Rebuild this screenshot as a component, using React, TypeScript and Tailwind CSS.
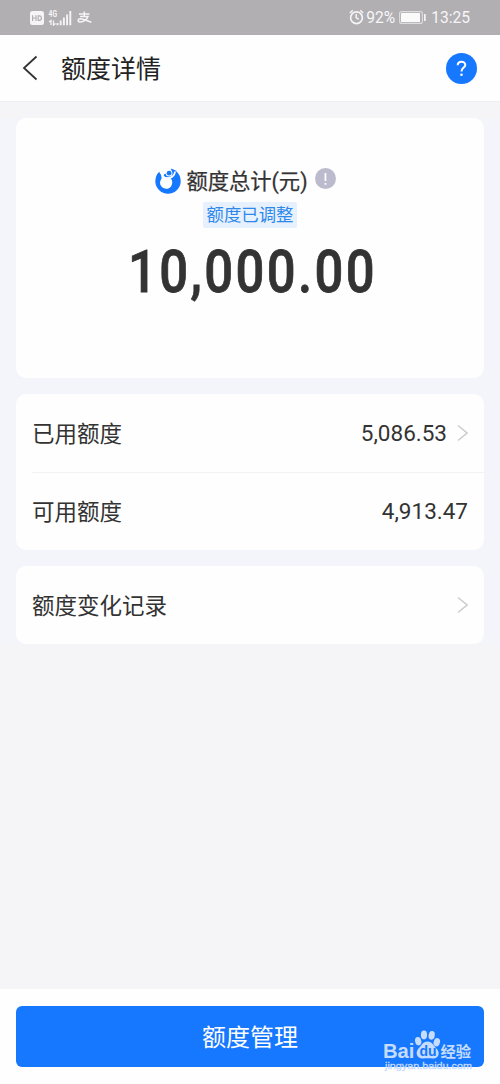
import type { ReactNode } from "react";

const records = [
  { label: "已用额度", value: "5,086.53", arrow: true },
  { label: "可用额度", value: "4,913.47", arrow: false },
];

function Chevron() {
  return (
    <svg width="12" height="18" viewBox="0 0 12 18" fill="none" className="shrink-0">
      <path d="M2 1.5 L11 9 L2 16.5" stroke="#cccccc" strokeWidth="1.5" />
    </svg>
  );
}

function Card({ children, className }: { children: ReactNode; className: string }) {
  return <div className={`rounded-[10px] bg-[#fefefe] ${className}`}>{children}</div>;
}

function StatusBar() {
  return (
    <div className="flex h-[35px] shrink-0 items-center justify-between bg-[#b1afb2] pl-[30px] pr-[30px] text-[#f7f6f8]">
      <div className="flex items-center">
        <svg width="14" height="14" viewBox="0 0 14 14">
          <rect width="14" height="14" rx="2.5" fill="#f5f4f6" />
          <path
            d="M2.6 4.2V10M6 4.2V10M2.6 7H6M8.2 4.8V9.4H9.3Q11.4 9.4 11.4 7.1Q11.4 4.8 9.3 4.8Z"
            stroke="#b1afb2"
            strokeWidth="1.2"
            fill="none"
          />
        </svg>
        <svg width="24" height="16" viewBox="0 0 24 16" className="ml-[4px]">
          <text x="0.5" y="7" fontSize="8.5" fontWeight="700" fontFamily="Roboto, sans-serif" textLength="8.5" lengthAdjust="spacingAndGlyphs" fill="#f5f4f6">4G</text>
          <path d="M3 15V10.5L1 12M5.5 10.5V15L7.5 13.5" stroke="#f5f4f6" strokeWidth="1.3" fill="none" />
          <path d="M9.5 13V15.2M12.7 10.5V15.2M15.9 7.5V15.2M19.1 4.5V15.2M22.3 1V15.2" stroke="#f5f4f6" strokeWidth="1.9" />
        </svg>
        <svg width="15" height="13" viewBox="0 0 15 13" fill="none" stroke="#f5f4f6" className="ml-[5px]">
          <path d="M2 3H12.5M7.3 0.5V5.5M3 5.6H11C10 8.5 6.5 11 3.4 11C0.5 11 0.5 7.8 3.4 7.7C6.8 7.7 10 10 14.4 11.2" strokeWidth="1.5" />
        </svg>
      </div>
      <div className="flex items-center font-[Roboto,sans-serif] text-[15.6px]">
        <svg width="15" height="16" viewBox="0 0 15 16" fill="none" stroke="#f5f4f6" className="mr-[2px]">
          <circle cx="7.5" cy="8.7" r="5.9" strokeWidth="1.7" />
          <path d="M7.2 5V8.7L9.8 10.4M0.8 4L3.8 1.3M14.2 4L11.2 1.3" strokeWidth="1.5" />
        </svg>
        <span className="pt-[2px]">92%</span>
        <svg width="27" height="13" viewBox="0 0 27 13" className="ml-[4px] mr-[5px]">
          <rect x="0.6" y="0.6" width="22.8" height="11.8" rx="2" fill="none" stroke="#dddcde" strokeWidth="1.1" />
          <rect x="2" y="2" width="19" height="9" rx="0.5" fill="#fafafa" />
          <rect x="25" y="3" width="1.7" height="7" rx="0.5" fill="#f5f4f6" />
        </svg>
        <span className="pt-[2px]">13:25</span>
      </div>
    </div>
  );
}

function Header() {
  return (
    <header className="flex h-[67px] shrink-0 items-center border-b border-[#eeeef0] bg-[#fefefe] pl-[22px] pr-[23px]">
      <svg width="16" height="26" viewBox="0 0 16 26" fill="none">
        <path d="M14.5 1.5 L2 13 L14.5 24.5" stroke="#333333" strokeWidth="1.8" />
      </svg>
      <h1 className="ml-[23px] flex-1 pt-[2px] text-[25px] leading-none text-[#222222]">额度详情</h1>
      <div className="flex size-[31px] items-center justify-center rounded-full bg-[#1677ff]">
        <svg width="11" height="17" viewBox="0 0 11 17" fill="none">
          <path d="M1.7 5.2C1.7 0.6 9.3 0.6 9.3 5C9.3 7.6 5.5 7.8 5.5 11.6" stroke="white" strokeWidth="2" />
          <circle cx="5.5" cy="14.7" r="1.3" fill="white" />
        </svg>
      </div>
    </header>
  );
}

function HuabeiLogo() {
  return (
    <svg width="26" height="26" viewBox="0 0 26 26" className="shrink-0">
      <circle cx="13" cy="13" r="12.7" fill="#1677ff" />
      {/* gap at the top, raised arms and body */}
      <path d="M3 -1H15.5L16.5 3L12 5L9 6.5L8 9L6 7L4.5 4.5Z" fill="#fefefe" />
      <path d="M6.8 5.5C7.8 9.8 12 10.3 14.5 9.8C17.5 9.2 19.3 7.5 20 4" fill="none" stroke="#fefefe" strokeWidth="1.7" strokeLinecap="round" />
      <path d="M6.4 6C7.5 9 12 9.8 15 9.6C17.6 12 18 15.6 16 18.4C13.7 21.4 9 21.5 6.5 18.6C4.4 16 4.6 12.8 6.6 10.4C6.5 9 6 7.5 6.4 6Z" fill="#fefefe" />
      <circle cx="14.1" cy="5.2" r="3.3" fill="#fefefe" />
      <circle cx="14.1" cy="5.2" r="2.4" fill="#1677ff" />
      <circle cx="3.9" cy="7.2" r="1.8" fill="#1677ff" />
    </svg>
  );
}

function Watermark() {
  return (
    <div className="absolute left-[384px] top-[1029px] h-[55px] w-[92px] overflow-hidden">
      <svg width="92" height="55" viewBox="0 0 92 55">
        <g fill="#c5dcfd">
          <text x="-1" y="28.7" fontSize="20.5" fontWeight="700" fontFamily="'Liberation Sans', sans-serif" textLength="31.5" lengthAdjust="spacingAndGlyphs">Bai</text>
          <ellipse cx="34.2" cy="12.2" rx="3.1" ry="4.2" transform="rotate(-12 34.2 12.2)" />
          <ellipse cx="40" cy="6" rx="3.1" ry="4.4" />
          <ellipse cx="47.7" cy="6.3" rx="3.1" ry="4.4" transform="rotate(10 47.7 6.3)" />
          <ellipse cx="52.8" cy="13.3" rx="3.1" ry="4.2" transform="rotate(18 52.8 13.3)" />
          <path d="M43.5 12.5C48.5 12.5 49.5 17 52.5 19.5C57 24 54 30 49 29.5C46 29 42 29 39 29.5C33.5 30 30.5 24 34.5 19.5C37.5 17 38.5 12.5 43.5 12.5Z" />
          <text x="56.5" y="27.5" fontSize="15.3" fontWeight="700" fontFamily="'Noto Sans CJK SC', sans-serif">经验</text>
          <text x="1" y="39.8" fontSize="9.8" fontFamily="'Liberation Sans', sans-serif" textLength="87" lengthAdjust="spacingAndGlyphs" stroke="#c5dcfd" strokeWidth="0.3">jingyan.baidu.com</text>
        </g>
        <text x="35.5" y="27" fontSize="14" fontWeight="700" fontFamily="'Liberation Sans', sans-serif" fill="#1677ff">du</text>
      </svg>
    </div>
  );
}

export default function App() {
  return (
    <div className="relative flex h-[1084px] w-[500px] flex-col overflow-hidden bg-[#f5f4f7] font-[Roboto,'Noto_Sans_CJK_SC',sans-serif] text-[#333333]">
      <StatusBar />
      <Header />

      <main className="flex-1 pt-[16px]">
        <div className="space-y-[16px] bg-[#f3f5fb] px-[16px]">
          {/* Total quota */}
          <Card className="flex h-[260px] flex-col items-center pt-[49px]">
            <div className="flex h-[27px] items-center pr-[9px]">
              <HuabeiLogo />
              <span className="ml-[5px] pt-[2px] text-[21.3px] leading-none [-webkit-text-stroke:0.25px_#333333]">额度总计(元)</span>
              <div className="mb-[4px] ml-[7px] flex size-[21px] items-center justify-center rounded-full bg-[#bcbbcd]">
                <svg width="3" height="12" viewBox="0 0 3 12" fill="white">
                  <rect x="0.6" width="1.7" height="8" />
                  <rect x="0.6" y="10" width="1.7" height="1.8" />
                </svg>
              </div>
            </div>
            <div className="mt-[8px] flex h-[26px] w-[94px] items-center justify-center rounded-[2px] bg-[#e7f1fd] pt-[2px] text-[17.4px] leading-none text-[#2e88ea]">
              额度已调整
            </div>
            <div className="mt-[14px] origin-center scale-x-[0.86] whitespace-nowrap pl-[5px] text-[59px] font-medium leading-[60px] tracking-[2.8px] [-webkit-text-stroke:0.8px_#333333]">
              10,000.00
            </div>
          </Card>

          {/* Used and available */}
          <Card className="h-[156px] pl-[16px]">
            {records.map((item, i) => (
              <div
                key={item.label}
                className={`flex h-[78px] items-center pr-[16px] text-[22.5px] ${i > 0 ? "border-t border-[#f2f2f4]" : ""}`}
              >
                <span className="flex-1 pt-[3px]">{item.label}</span>
                <span className="pt-px">{item.value}</span>
                {item.arrow && (
                  <span className="ml-[9px]">
                    <Chevron />
                  </span>
                )}
              </div>
            ))}
          </Card>

          {/* History */}
          <Card className="flex h-[78px] items-center justify-between px-[16px] text-[22.5px]">
            <span className="pt-[3px]">额度变化记录</span>
            <Chevron />
          </Card>
        </div>
      </main>

      <footer className="h-[95px] shrink-0 bg-[#fefefe] px-[16px] pt-[17px]">
        <button className="flex h-[61px] w-full items-center justify-center rounded-[6px] bg-[#1677ff] pt-[3px] text-[24px] text-white">
          额度管理
        </button>
      </footer>
      <Watermark />
    </div>
  );
}
